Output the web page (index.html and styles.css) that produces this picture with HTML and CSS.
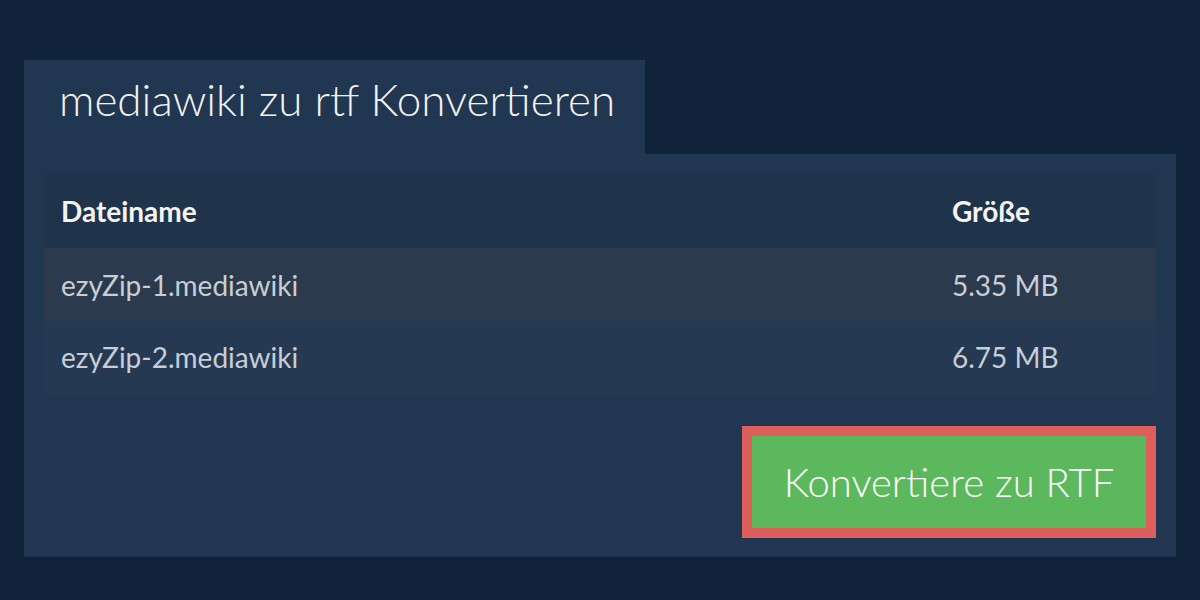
FILE: index.html
```html
<!DOCTYPE html>
<html lang="de">
<head>
<meta charset="utf-8">
<title>mediawiki zu rtf Konvertieren</title>
<link rel="stylesheet" href="styles.css">
</head>
<body>
<div class="page">
  <div class="tab"><h1 class="title">mediawiki zu rtf Konvertieren</h1></div>
  <div class="panel">
    <table class="files">
      <thead>
        <tr><th class="name">Dateiname</th><th class="size">Größe</th></tr>
      </thead>
      <tbody>
        <tr class="odd"><td class="name">ezyZip-1.mediawiki</td><td class="size">5.35 MB</td></tr>
        <tr class="even"><td class="name">ezyZip-2.mediawiki</td><td class="size">6.75 MB</td></tr>
      </tbody>
    </table>
    <div class="actions">
      <button class="convert">Konvertiere zu RTF</button>
    </div>
  </div>
</div>
</body>
</html>
```

FILE: styles.css
```css
html, body {
  margin: 0;
  padding: 0;
  background: #10233a;
  font-family: Lato, "Noto Sans", sans-serif;
}

.page {
  padding: 60px 24px 43px;
}

.tab {
  display: inline-block;
  vertical-align: top;
  width: 621px;
  height: 94px;
  background: #213650;
  box-sizing: border-box;
  padding: 13px 0 0 35px;
}

.title {
  margin: 0;
  font-size: 44px;
  font-weight: 300;
  color: #f2f2f2;
  line-height: 53px;
  white-space: nowrap;
}

.panel {
  background: #213650;
  padding: 20px 20px 19px;
}

.files {
  width: 100%;
  border-collapse: collapse;
}

.files th,
.files td {
  text-align: left;
  padding: 0 0 0 17px;
  vertical-align: middle;
}

.files th {
  background: #1f334a;
  color: #f3f3f3;
  font-weight: 700;
  font-size: 28px;
  height: 74px;
}

.files td {
  color: #c8ced6;
  font-size: 28px;
  height: 72px;
}

.files .size {
  width: 204px;
}

.files tr.odd td {
  background: #2b3a4c;
  height: 73px;
}

.files tr.even td {
  background: #253a52;
}

.actions {
  display: flex;
  justify-content: flex-end;
  margin-top: 33px;
}

.convert {
  width: 414px;
  height: 112px;
  border: 10px solid #dc5f5b;
  background: #5cb85c;
  color: #ffffff;
  font-family: Lato, "Noto Sans", sans-serif;
  font-weight: 300;
  font-size: 40px;
  padding: 0;
  margin: 0;
}
```
